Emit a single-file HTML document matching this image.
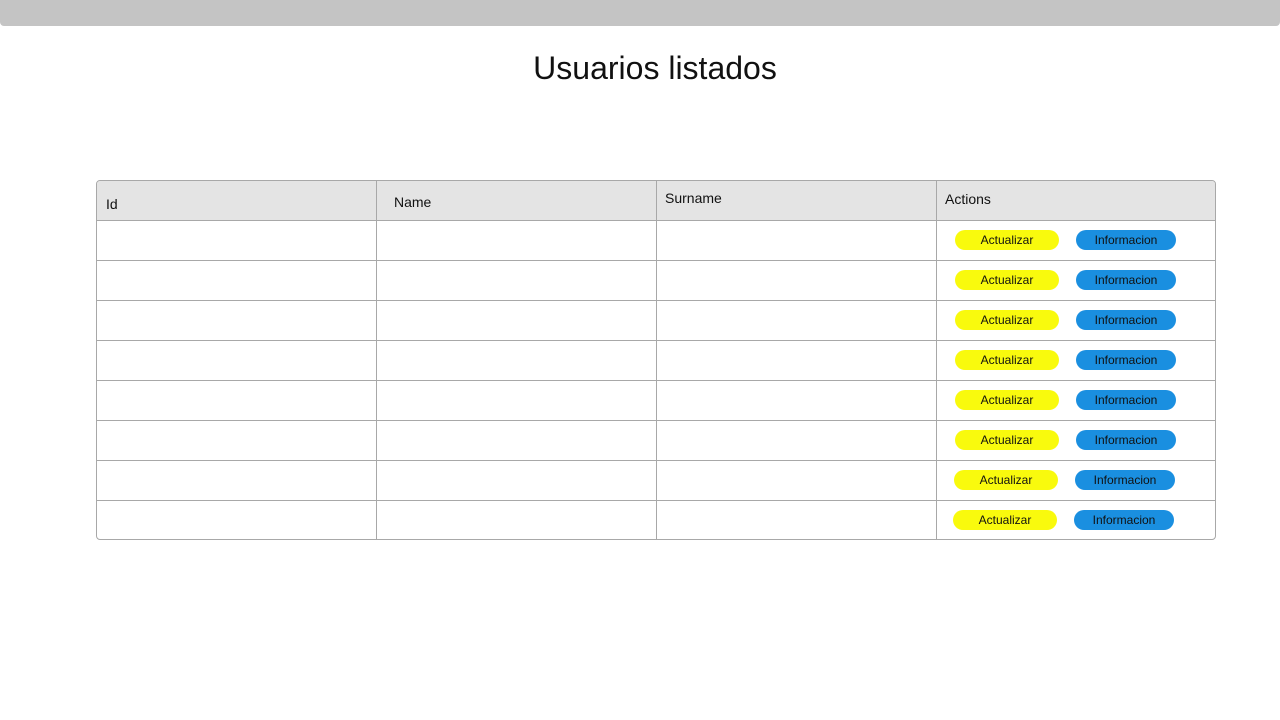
<!DOCTYPE html>
<html><head><style>
body{margin:0;width:1280px;height:720px;background:#fff;font-family:"Liberation Sans",Arial,sans-serif;position:relative;overflow:hidden}
.bar{position:absolute;left:0;top:0;width:1280px;height:26px;background:#c4c4c4;border-radius:0 0 4px 4px}
h1{position:absolute;left:15px;width:1280px;top:48px;margin:0;text-align:center;font-weight:normal;font-size:32px;line-height:40px;color:#111}
.tbl{position:absolute;left:96px;top:180px;width:1118px;height:358px;border:1px solid #a8a8a8;border-radius:4px;overflow:hidden}
.head{position:absolute;left:0;top:0;width:100%;height:39px;background:#e4e4e4;border-bottom:1px solid #a8a8a8}
.h{position:absolute;top:0;width:100%;height:1px;background:#a8a8a8;left:0}
.v{position:absolute;top:0;height:360px;width:1px;background:#a8a8a8}
.t{position:absolute;font-size:14px;color:#111}
.b{position:absolute;height:20px;border-radius:10px;font-size:12px;line-height:20px;text-align:center;color:#111}
.y{background:#f9fa0d;width:104px}
.bl{background:#1a8fe0;width:100px}
</style></head><body>
<div class="bar"></div>
<h1>Usuarios listados</h1>
<div class="tbl">
<div class="head"></div>
<div class="h" style="top:79px"></div><div class="h" style="top:119px"></div><div class="h" style="top:159px"></div><div class="h" style="top:199px"></div><div class="h" style="top:239px"></div><div class="h" style="top:279px"></div><div class="h" style="top:319px"></div>
<div class="v" style="left:279px"></div><div class="v" style="left:559px"></div><div class="v" style="left:839px"></div>
<div class="t" style="left:9px;top:15px">Id</div>
<div class="t" style="left:297px;top:13px">Name</div>
<div class="t" style="left:568px;top:9px">Surname</div>
<div class="t" style="left:848px;top:10px">Actions</div>
<div class="b y" style="left:858px;top:49px">Actualizar</div><div class="b bl" style="left:979px;top:49px">Informacion</div>
<div class="b y" style="left:858px;top:89px">Actualizar</div><div class="b bl" style="left:979px;top:89px">Informacion</div>
<div class="b y" style="left:858px;top:129px">Actualizar</div><div class="b bl" style="left:979px;top:129px">Informacion</div>
<div class="b y" style="left:858px;top:169px">Actualizar</div><div class="b bl" style="left:979px;top:169px">Informacion</div>
<div class="b y" style="left:858px;top:209px">Actualizar</div><div class="b bl" style="left:979px;top:209px">Informacion</div>
<div class="b y" style="left:858px;top:249px">Actualizar</div><div class="b bl" style="left:979px;top:249px">Informacion</div>
<div class="b y" style="left:857px;top:289px">Actualizar</div><div class="b bl" style="left:978px;top:289px">Informacion</div>
<div class="b y" style="left:856px;top:329px">Actualizar</div><div class="b bl" style="left:977px;top:329px">Informacion</div>
</div>
</body></html>
